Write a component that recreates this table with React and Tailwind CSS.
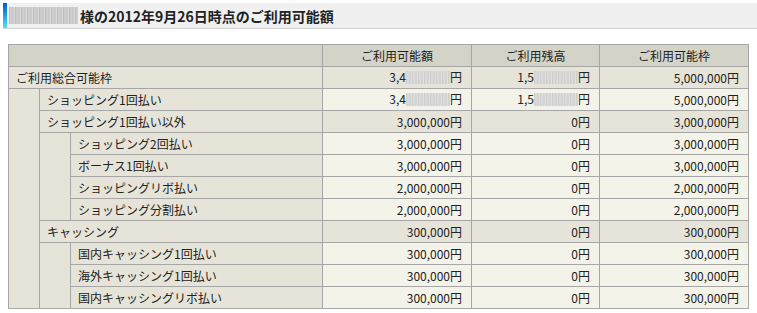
const rows = [
  { label: '国内キャッシング1回払い', values: ['300,000円', '0円', '300,000円'] },
];

const Blur = ({ w = 'w-[44px]' }) => (
  <span
    className={`inline-block ${w} h-[13px] align-[-2px] bg-[repeating-linear-gradient(90deg,#c9c9c9_0px,#dedede_2px,#cfcfcf_4px,#e4e4e4_6px)]`}
  />
);

const Masked = ({ head }) => (
  <span>
    {head}
    <Blur />
    円
  </span>
);

const Label = ({ span = 1, children }) => (
  <td colSpan={span} className="h-[22px] border border-[#a6a6a6] bg-[#e6e4d9] pl-[7px] whitespace-nowrap">
    {children}
  </td>
);

const Val = ({ dark, children }) => (
  <td
    className={`h-[22px] border border-[#a6a6a6] pr-[9px] text-right whitespace-nowrap ${
      dark ? 'bg-[#e6e4d9]' : 'bg-[#f4f3e9]'
    }`}
  >
    {children}
  </td>
);

const Spacer = ({ rows }) => (
  <td rowSpan={rows} className="border border-[#a6a6a6] bg-[#e6e4d9]" />
);

export default function App() {
  return (
    <div className="h-[313px] w-[757px] overflow-hidden bg-white text-[#222] font-['Noto_Sans_CJK_JP',sans-serif]">
      {/* Title bar */}
      <div className="pl-[3px] pt-[3px]">
        <div className="flex h-[26px] items-stretch border-b border-[#d2d2d2] bg-[#f0f0f0]">
          <div className="w-[4px] bg-gradient-to-b from-[#0b58c4] to-[#4fe3f6]" />
          <div className="flex items-center pl-[2px]">
            <span className="inline-block h-[17px] w-[69px] bg-[repeating-linear-gradient(90deg,#b9b9b9_0px,#d3d3d3_2px,#c4c4c4_4px,#e0e0e0_6px)]" />
            <span className="pl-[2px] text-[14px] font-bold leading-none text-[#222]">
              様の2012年9月26日時点のご利用可能額
            </span>
          </div>
        </div>
      </div>

      {/* Table */}
      <table className="ml-[8px] mt-[15px] w-[740px] table-fixed border-collapse text-[12px] leading-none">
        <colgroup>
          <col className="w-[31px]" />
          <col className="w-[31px]" />
          <col className="w-[252px]" />
          <col className="w-[149px]" />
          <col className="w-[128px]" />
          <col className="w-[149px]" />
        </colgroup>
        <thead>
          <tr>
            <th colSpan={3} className="h-[22px] border border-[#a6a6a6] bg-[#d4d3c7]" />
            <th className="h-[22px] border border-[#a6a6a6] bg-[#d4d3c7] font-normal">ご利用可能額</th>
            <th className="h-[22px] border border-[#a6a6a6] bg-[#d4d3c7] font-normal">ご利用残高</th>
            <th className="h-[22px] border border-[#a6a6a6] bg-[#d4d3c7] font-normal">ご利用可能枠</th>
          </tr>
        </thead>
        <tbody>
          <tr>
            <Label span={3}>ご利用総合可能枠</Label>
            <Val dark><Masked head="3,4" /></Val>
            <Val dark><Masked head="1,5" /></Val>
            <Val dark>5,000,000円</Val>
          </tr>
          <tr>
            <Spacer rows={10} />
            <Label span={2}>ショッピング1回払い</Label>
            <Val><Masked head="3,4" /></Val>
            <Val><Masked head="1,5" /></Val>
            <Val>5,000,000円</Val>
          </tr>
          <tr>
            <Label span={2}>ショッピング1回払い以外</Label>
            <Val dark>3,000,000円</Val>
            <Val dark>0円</Val>
            <Val dark>3,000,000円</Val>
          </tr>
          <tr>
            <Spacer rows={4} />
            <Label>ショッピング2回払い</Label>
            <Val>3,000,000円</Val>
            <Val>0円</Val>
            <Val>3,000,000円</Val>
          </tr>
          <tr>
            <Label>ボーナス1回払い</Label>
            <Val>3,000,000円</Val>
            <Val>0円</Val>
            <Val>3,000,000円</Val>
          </tr>
          <tr>
            <Label>ショッピングリボ払い</Label>
            <Val>2,000,000円</Val>
            <Val>0円</Val>
            <Val>2,000,000円</Val>
          </tr>
          <tr>
            <Label>ショッピング分割払い</Label>
            <Val>2,000,000円</Val>
            <Val>0円</Val>
            <Val>2,000,000円</Val>
          </tr>
          <tr>
            <Label span={2}>キャッシング</Label>
            <Val dark>300,000円</Val>
            <Val dark>0円</Val>
            <Val dark>300,000円</Val>
          </tr>
          <tr>
            <Spacer rows={3} />
            <Label>{rows[0].label}</Label>
            <Val>300,000円</Val>
            <Val>0円</Val>
            <Val>300,000円</Val>
          </tr>
          <tr>
            <Label>海外キャッシング1回払い</Label>
            <Val>300,000円</Val>
            <Val>0円</Val>
            <Val>300,000円</Val>
          </tr>
          <tr>
            <Label>国内キャッシングリボ払い</Label>
            <Val>300,000円</Val>
            <Val>0円</Val>
            <Val>300,000円</Val>
          </tr>
        </tbody>
      </table>
    </div>
  );
}
